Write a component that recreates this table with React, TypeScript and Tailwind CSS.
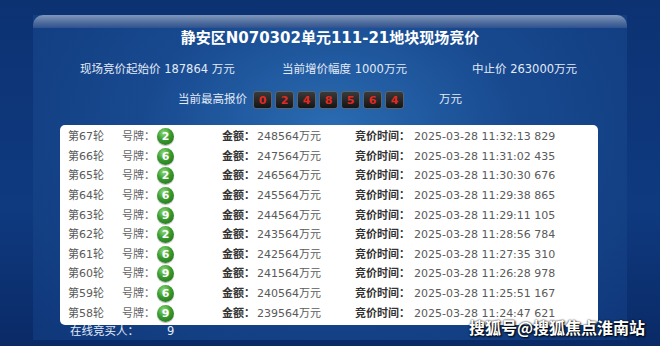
import React from "react";

// 竞价记录（最新一轮在最上面）
const rounds = [
  { round: 67, plate: 2, amount: 248564, time: "2025-03-28 11:32:13 829" },
  { round: 66, plate: 6, amount: 247564, time: "2025-03-28 11:31:02 435" },
  { round: 65, plate: 2, amount: 246564, time: "2025-03-28 11:30:30 676" },
  { round: 64, plate: 6, amount: 245564, time: "2025-03-28 11:29:38 865" },
  { round: 63, plate: 9, amount: 244564, time: "2025-03-28 11:29:11 105" },
  { round: 62, plate: 2, amount: 243564, time: "2025-03-28 11:28:56 784" },
  { round: 61, plate: 6, amount: 242564, time: "2025-03-28 11:27:35 310" },
  { round: 60, plate: 9, amount: 241564, time: "2025-03-28 11:26:28 978" },
  { round: 59, plate: 6, amount: 240564, time: "2025-03-28 11:25:51 167" },
  { round: 58, plate: 9, amount: 239564, time: "2025-03-28 11:24:47 621" },
];

const digits = ["0", "2", "4", "8", "5", "6", "4"];

const font = "font-['DejaVu_Sans','Noto_Sans_CJK_SC',sans-serif]";

const Ball: React.FC<{ n: number }> = ({ n }) => (
  <span className="w-[17px] h-[17px] rounded-full flex items-center justify-center text-white text-[11px] font-bold bg-[radial-gradient(circle_at_40%_30%,#8fdc7a_0%,#3a9a2e_45%,#1c6a17_100%)] shadow-[0_1px_1px_rgba(0,0,0,0.3)]">
    {n}
  </span>
);

const App: React.FC = () => {
  return (
    <div className={`relative w-[660px] h-[346px] overflow-hidden bg-[linear-gradient(180deg,#0c3272_0%,#0f3a80_60%,#0a2a66_100%)] ${font}`}>
      <div className="flex flex-col mx-[33px] mt-[15px] h-[325px] bg-[radial-gradient(ellipse_at_50%_35%,#2a6cb2_0%,#18498f_45%,#0f377a_100%)]">
        {/* 顶部高光条 */}
        <div className="h-[13px] rounded-t-[10px] bg-[linear-gradient(180deg,#7f97bb_0%,#4d6b9c_60%,#2e5290_100%)]" />

        {/* 标题 */}
        <div className="h-[20px] flex items-center justify-center text-white text-[15px] font-bold leading-none">
          静安区N070302单元111-21地块现场竞价
        </div>

        {/* 价格信息 */}
        <div className="mt-[14px] h-[16px] flex items-center pl-[47px] text-[11.5px] text-[#e3ebf7] leading-none whitespace-nowrap">
          <div className="w-[202px]">现场竞价起始价 187864 万元</div>
          <div className="w-[190px]">当前增价幅度 1000万元</div>
          <div>中止价 263000万元</div>
        </div>

        {/* 当前最高报价 */}
        <div className="mt-[11px] h-[22px] flex items-center pl-[145px] text-[11.5px] text-[#e3ebf7] leading-none">
          <span className="mr-[6px]">当前最高报价</span>
          <div className="flex gap-[3px]">
            {digits.map((d, i) => (
              <span
                key={i}
                className="w-[19px] h-[18px] rounded-[3px] border border-[#5a6470] bg-[linear-gradient(180deg,#3a3a3a_0%,#151515_100%)] flex items-center justify-center text-[#e02a22] text-[11px] font-bold"
              >
                {d}
              </span>
            ))}
          </div>
          <span className="ml-[35px]">万元</span>
        </div>

        {/* 竞价记录表 */}
        <div className="mt-[14px] ml-[27px] w-[538px] h-[200px] bg-white rounded-[5px] pt-[2px] pl-[8px] text-[11px] text-[#5a5a5a] leading-none">
          {rounds.map((r) => (
            <div key={r.round} className="h-[19.6px] flex items-center whitespace-nowrap">
              <span className="w-[54px]">第{r.round}轮</span>
              <span className="w-[100px] flex items-center">
                <span className="w-[35px] text-[#666]">号牌：</span>
                <Ball n={r.plate} />
              </span>
              <span className="w-[133px]">
                <span className="font-bold text-[#333]">金额：</span>
                <span className="ml-[2px]">{r.amount}万元</span>
              </span>
              <span>
                <span className="font-bold text-[#333]">竞价时间：</span>
                <span className="ml-[4px]">{r.time}</span>
              </span>
            </div>
          ))}
        </div>

        {/* 在线竞买人 */}
        <div className="h-[14px] flex items-center pl-[37px] text-[11.5px] text-[#e3ebf7] leading-none">
          <span className="w-[97px]">在线竞买人：</span>
          <span>9</span>
        </div>
      </div>

      {/* 水印 */}
      <div className="absolute right-[15px] top-[317px] text-white text-[16px] font-bold leading-[20px] font-['Noto_Sans_CJK_SC',sans-serif] [text-shadow:0_0_2px_#000,1px_1px_2px_#000]">
        搜狐号@搜狐焦点淮南站
      </div>
    </div>
  );
};

export default App;
